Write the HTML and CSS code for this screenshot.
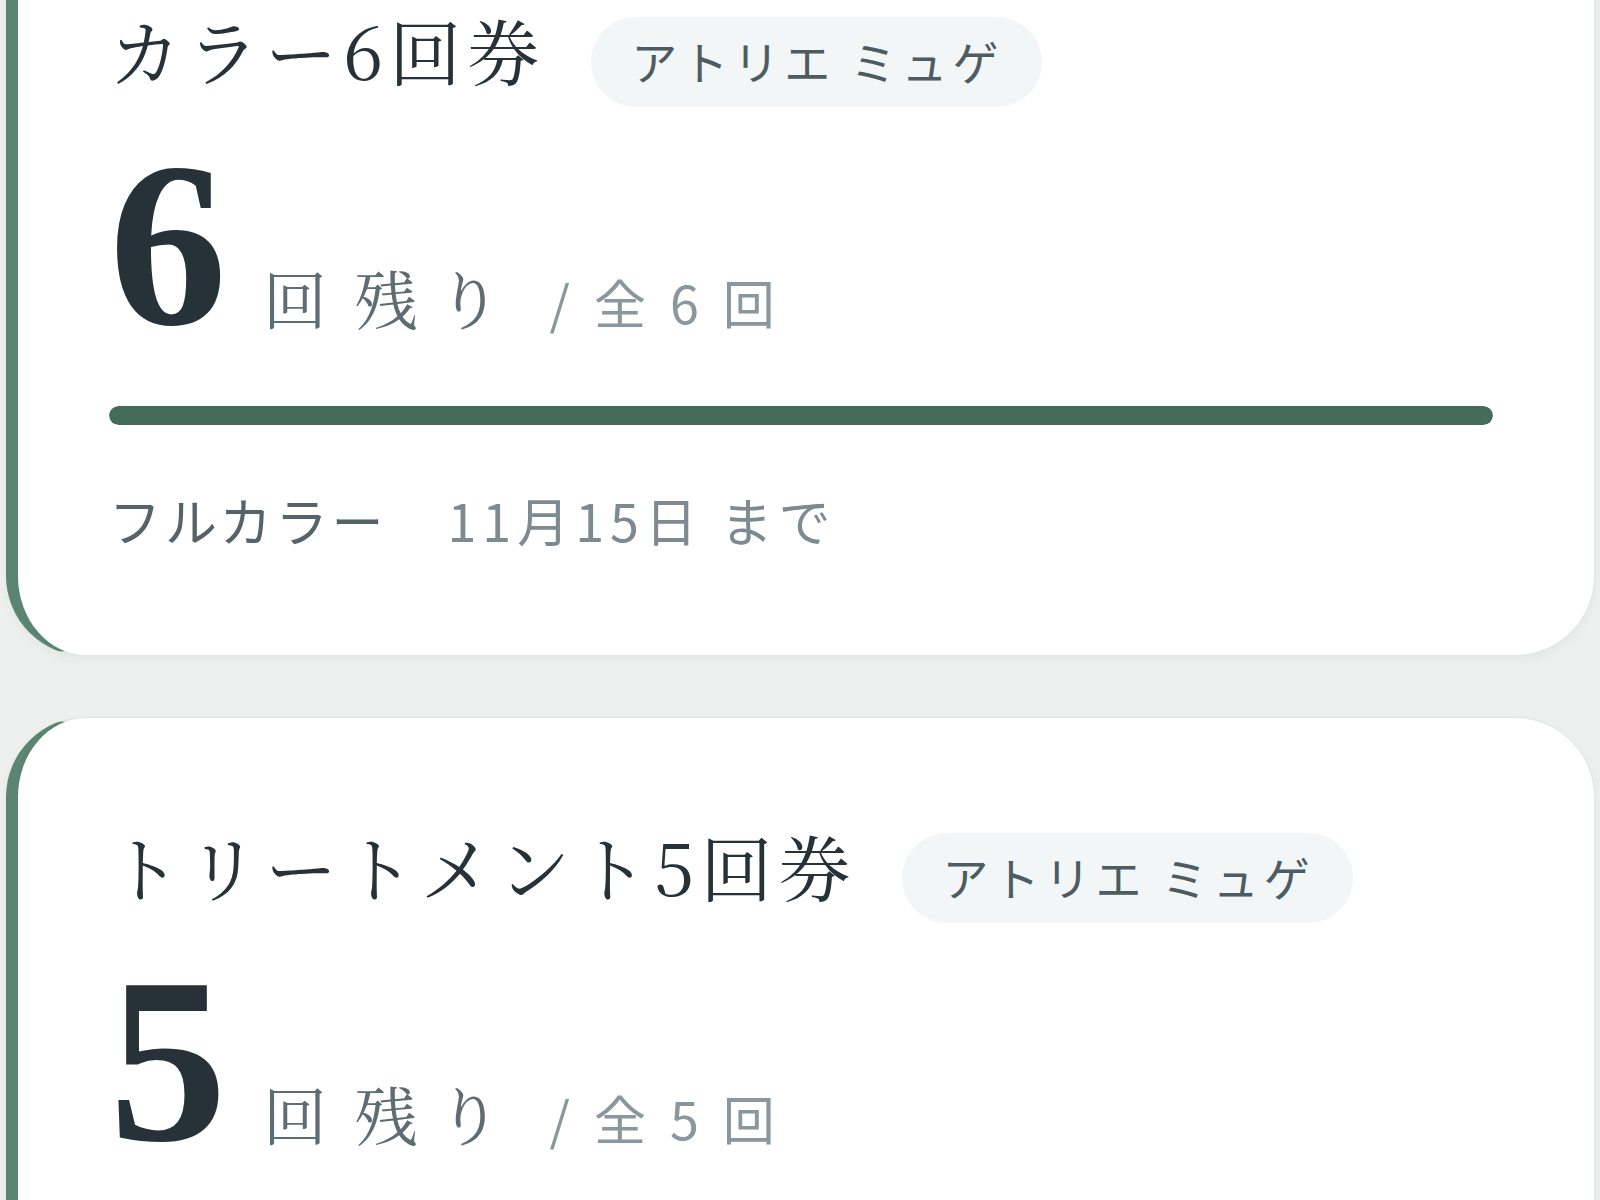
FILE: index.html
```html
<!DOCTYPE html>
<html lang="ja">
<head>
  <meta charset="UTF-8">
  <meta name="viewport" content="width=device-width, initial-scale=1.0">
  <title>回数券一覧</title>
  <link rel="stylesheet" href="styles.css">
</head>
<body>
  <div class="tickets">
    <div class="ticket">
      <div class="ticket-head">
        <h2 class="ticket-name">カラー6回券</h2>
        <span class="shop">アトリエ ミュゲ</span>
      </div>
      <div class="count">
        <span class="count-num">6</span>
        <span class="count-unit">回残り</span>
        <span class="count-total">/全6回</span>
      </div>
      <div class="bar"><div class="bar-fill" style="width:100%"></div></div>
      <div class="ticket-foot">
        <span class="menu">フルカラー</span>
        <span class="expire">11月15日 まで</span>
      </div>
    </div>

    <div class="ticket">
      <div class="ticket-head">
        <h2 class="ticket-name">トリートメント5回券</h2>
        <span class="shop">アトリエ ミュゲ</span>
      </div>
      <div class="count">
        <span class="count-num">5</span>
        <span class="count-unit">回残り</span>
        <span class="count-total">/全5回</span>
      </div>
      <div class="bar"><div class="bar-fill" style="width:100%"></div></div>
      <div class="ticket-foot">
        <span class="menu">トリートメント</span>
        <span class="expire">12月20日 まで</span>
      </div>
    </div>
  </div>
</body>
</html>
```

FILE: styles.css
```css
body {
  margin: 0;
  padding: 0;
  background-color: #edf0ef;
  font-family: "Noto Sans CJK JP", "Noto Sans", sans-serif;
  color: #28343a;
}

.tickets {
  margin-top: -99px;
  padding: 0 5px 0 6px;
}

.ticket {
  background: #ffffff;
  border: 1px solid #dfe7e6;
  border-left: 12px solid #5c8472;
  border-radius: 80px;
  padding: 104px 101px 102px 91px;
  margin-bottom: 61px;
  box-shadow: 0 4px 10px rgba(40, 60, 55, 0.05);
}

.ticket-head {
  display: flex;
  align-items: baseline;
  gap: 46px;
}

.ticket-name {
  margin: 0;
  font-family: "Noto Serif CJK JP", "IPAexMincho", "IPAMincho", "Liberation Serif", serif;
  font-weight: normal;
  font-size: 72px;
  line-height: 1.2;
  letter-spacing: 6px;
  color: #263238;
}

.shop {
  background: #f3f6f6;
  color: #4d5c62;
  font-size: 46px;
  line-height: 48px;
  letter-spacing: 5px;
  padding: 19px 38px 23px 40px;
  border-radius: 46px;
}

.count {
  display: flex;
  align-items: baseline;
  margin-top: 20px;
}

.count-num {
  font-family: "Liberation Serif", serif;
  font-weight: bold;
  font-size: 236px;
  line-height: 1;
  color: #263238;
}

.count-unit {
  margin-left: 36px;
  font-family: "Noto Serif CJK JP", "IPAexMincho", "IPAMincho", "Liberation Serif", serif;
  font-size: 64px;
  letter-spacing: 27px;
  font-feature-settings: "palt";
  color: #5d6d73;
}

.count-total {
  margin-left: 29px;
  font-size: 52px;
  letter-spacing: 24px;
  color: #8a979c;
}

.bar {
  margin-top: 43px;
  height: 19px;
  border-radius: 10px;
  background: #e3eae8;
  overflow: hidden;
}

.bar-fill {
  height: 100%;
  background: #446c59;
  border-radius: 10px;
}

.ticket-foot {
  display: flex;
  gap: 60px;
  margin-top: 61px;
  font-size: 52px;
  line-height: 67px;
  letter-spacing: 4px;
}

.menu {
  color: #56646a;
}

.expire {
  color: #7d8a90;
  letter-spacing: 6px;
}
```
